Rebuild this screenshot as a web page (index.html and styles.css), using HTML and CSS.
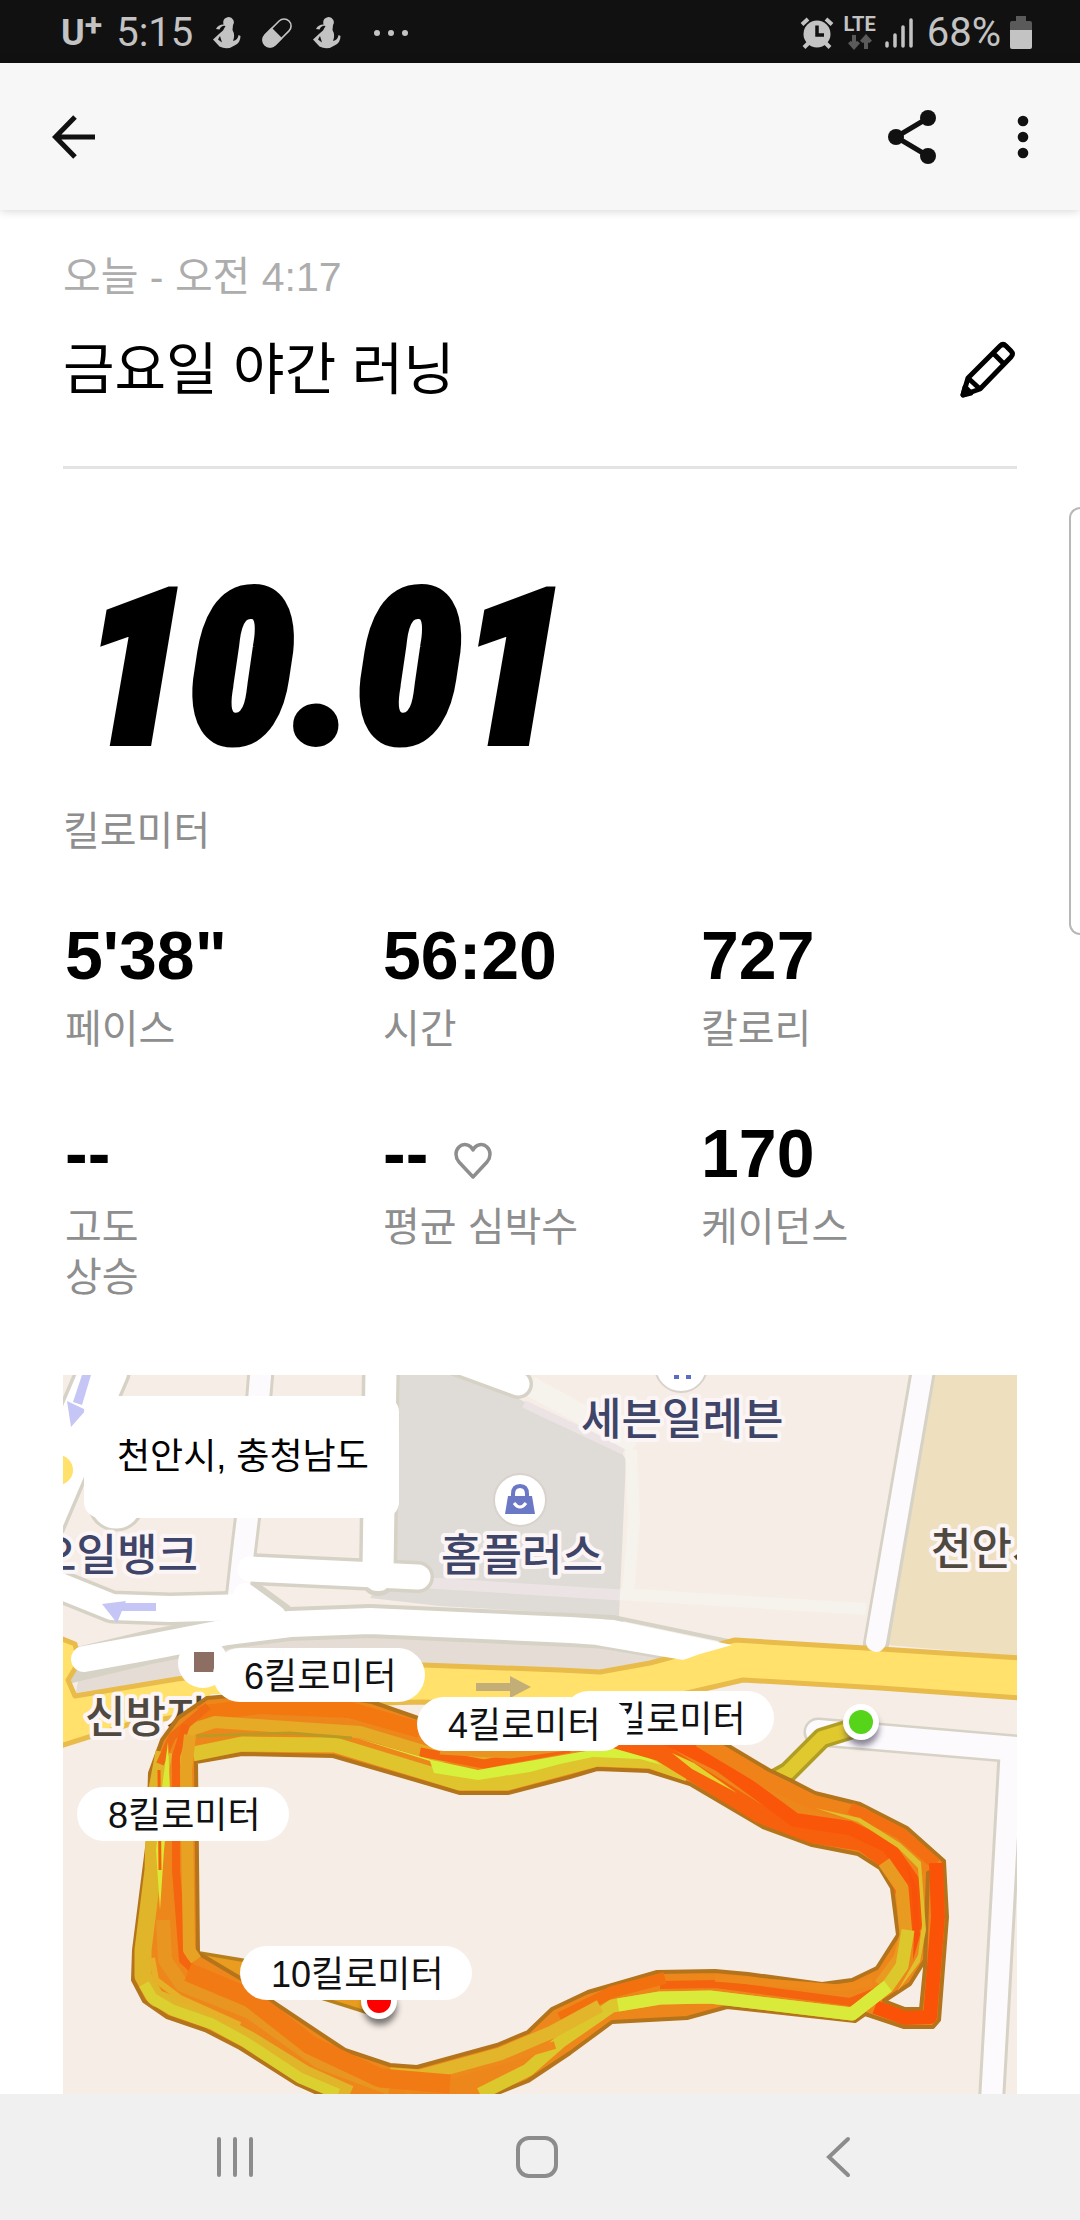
FILE: index.html
```
<!DOCTYPE html>
<html lang="ko">
<head>
<meta charset="utf-8">
<meta name="viewport" content="width=device-width, initial-scale=1">
<title>금요일 야간 러닝</title>
<link rel="stylesheet" href="styles.css">
</head>
<body>
<div class="app">
  <div class="status">
    <div class="status-left">
      <span class="carrier">U<span class="carrier-plus">+</span></span>
      <span class="clock">5:15</span>
      <svg class="notice" width="28" height="32" viewBox="0 0 28 32"><use href="#figure"/></svg>
      <svg class="notice" width="32" height="34" viewBox="0 0 32 34" aria-hidden="true">
        <g transform="rotate(-45 16 17)"><rect x="-1" y="10" width="34" height="14" rx="7" fill="none" stroke="#c3c3c3" stroke-width="1.600"/><path d="M16 9.200H6.500a7.800 7.800 0 0 0 0 15.600h9.500z" fill="#c3c3c3"/></g>
      </svg>
      <svg class="notice" width="28" height="32" viewBox="0 0 28 32"><use href="#figure"/></svg>
      <svg class="dots" width="36" height="8" viewBox="0 0 36 8" fill="#c3c3c3" aria-hidden="true"><circle cx="4" cy="4" r="3"/><circle cx="18" cy="4" r="3"/><circle cx="32" cy="4" r="3"/></svg>
    </div>
    <div class="status-right">
      <svg width="34" height="34" viewBox="0 0 34 34" aria-hidden="true">
        <circle cx="17" cy="18" r="13.500" fill="#c3c3c3"/>
        <g stroke="#c3c3c3" stroke-width="4"><path d="M2 8.500 8 3M32 8.500 26 3M4 31.500l5-5M30 31.500l-5-5"/></g>
        <path d="M17 9.500v9.500h7" fill="none" stroke="#111" stroke-width="3.500"/>
      </svg>
      <div class="network">
        <span>LTE</span>
        <svg width="24" height="16" viewBox="0 0 24 16" fill="none" stroke="#5a5a5a" stroke-width="4" aria-hidden="true"><path d="M6 1v11M1.500 8 6 13l4.500-5M18 15V4M13.500 8 18 3l4.500 5"/></svg>
      </div>
      <svg width="28" height="32" viewBox="0 0 28 32" stroke="#c3c3c3" stroke-width="3.500" stroke-linecap="round" aria-hidden="true"><path d="M2 26v3M10 18v11M18 10v19M26 3v26"/></svg>
      <span class="percent">68%</span>
      <svg class="battery" width="22" height="34" viewBox="0 0 22 34" aria-hidden="true"><path d="M6 0h10v5h4q2 0 2 2v8H0V7q0-2 2-2h4z" fill="#5a5a5a"/><path d="M0 14h22v17q0 2-2 2H2q-2 0-2-2z" fill="#c3c3c3"/></svg>
    </div>
  </div>

  <header class="toolbar">
    <button class="icon-button" aria-label="뒤로">
      <svg width="44" height="44" viewBox="0 0 44 44" fill="none" stroke="#111" stroke-width="5"><path d="M43 22H5M23 2 3.500 22 23 42"/></svg>
    </button>
    <div class="toolbar-actions">
      <button class="icon-button" aria-label="공유">
        <svg width="48" height="54" viewBox="0 0 48 54" fill="#111"><path d="M40 8 8 27l32 19" fill="none" stroke="#111" stroke-width="5"/><circle cx="40" cy="8" r="8"/><circle cx="8" cy="27" r="8"/><circle cx="40" cy="46" r="8"/></svg>
      </button>
      <button class="icon-button" aria-label="더보기">
        <svg width="12" height="44" viewBox="0 0 12 44" fill="#111"><circle cx="6" cy="6" r="5.300"/><circle cx="6" cy="22" r="5.300"/><circle cx="6" cy="38" r="5.300"/></svg>
      </button>
    </div>
  </header>

  <main class="content">
    <section class="intro">
      <p class="date">오늘 - 오전 4:17</p>
      <div class="title-row">
        <h1>금요일 야간 러닝</h1>
        <button class="icon-button" aria-label="이름 수정">
          <svg width="58" height="58" viewBox="0 0 58 58" fill="none" stroke="#000" stroke-width="5" stroke-linejoin="round"><path d="M4 54 9 37 41 5q3-3 6 0l5 5q3 3 0 6L21 48zM9 37l12 11M34 12l11 11"/><path d="M4 54l2-8 6 6z" fill="#000"/></svg>
        </button>
      </div>
    </section>

    <section class="distance">
      <p class="distance-value">10.01</p>
      <p class="label">킬로미터</p>
    </section>

    <section class="stats">
      <div class="stat"><p class="value">5'38"</p><p class="label">페이스</p></div>
      <div class="stat"><p class="value">56:20</p><p class="label">시간</p></div>
      <div class="stat"><p class="value">727</p><p class="label">칼로리</p></div>
      <div class="stat"><p class="value">--</p><p class="label label-narrow">고도 상승</p></div>
      <div class="stat"><p class="value">--<svg class="heart" width="38" height="38" viewBox="0 0 38 38" fill="none" stroke="#8e8e8e" stroke-width="3.500" stroke-linejoin="round" aria-hidden="true"><path d="M19 35 5 20C1 15 1 9 5 5s11-3 14 3c3-6 10-7 14-3s4 10 0 15z"/></svg></p><p class="label">평균 심박수</p></div>
      <div class="stat"><p class="value">170</p><p class="label">케이던스</p></div>
    </section>

    <section class="map" aria-label="러닝 경로">
      <svg class="map-art" viewBox="63 1375 954 719" preserveAspectRatio="xMidYMin slice">
        <defs><filter id="soft" x="-50%" y="-50%" width="200%" height="200%"><feGaussianBlur stdDeviation="3"/></filter></defs>
        <rect x="63" y="1375" width="954" height="719" fill="#f6ede6"/>
        <!-- blocks -->
        <path d="M400 1375H462L515 1397 620 1450 626 1460 619 1617 560 1613 440 1606 370 1598 396 1560z" fill="#dfdbd6"/>
        <path d="M430 1583 621 1595" stroke="#ece4e4" stroke-width="11"/>
        <path d="M620 1594 866 1609" stroke="#f6f2ec" stroke-width="12"/>
        <path d="M631 1450 634 1520 628 1594" fill="none" stroke="#f6f2ec" stroke-width="12"/>
        <path d="M524 1404 624 1451" stroke="#ece4e4" stroke-width="8"/>
        <path d="M530 1386 636 1444" stroke="#f6f2ec" stroke-width="20"/>
        <path d="M935 1375h82v281l-130-11z" fill="#eedfbf"/>
        <path d="M75 1696 80 1672 177 1650 227 1644 370 1630 570 1642 680 1657 600 1673 423 1666 177 1680z" fill="#e5ddd5"/>
        <!-- local roads -->
        <g fill="none" stroke="#d6d2c6" stroke-linecap="round" stroke-linejoin="round">
          <path d="M450 1359 518 1384" stroke-width="30"/>
          <path d="M104 1370 37 1527" stroke-width="54"/>
          <path d="M261 1370 252 1480 243 1555 238 1600" stroke-width="27"/>
          <path d="M381 1370 378 1570" stroke-width="38"/>
          <path d="M250 1569 418 1577" stroke-width="32"/>
          <path d="M377 1581h2" stroke-width="30"/>
          <path d="M60 1586 112 1607 170 1609 250 1607" stroke-width="33"/>
          <path d="M250 1594 280 1616" stroke-width="28"/>
          <path d="M66 1667 150 1647 227 1632 290 1624 370 1621 570 1630 610 1632" stroke-width="34"/>
          <path d="M613 1617 728 1641M598 1646 680 1660" stroke-width="4"/>
          <path d="M923 1370 876 1644" stroke-width="26"/>
          <path d="M818 1732 1040 1751" stroke-width="29"/>
          <path d="M1011 1756 991 2110" stroke-width="27"/>
        </g>
        <circle cx="116" cy="1503" r="27" fill="#fff" stroke="#d6d2c6" stroke-width="3"/>
        <!-- main road -->
        <path d="M60 1638 75 1644 79 1662 68 1680 75 1696 177 1679 300 1664 423 1665 560 1670 600 1672 650 1663 735 1640 865 1648 1020 1658V1698L880 1688 743 1680 687 1693 620 1704 500 1705 423 1702 250 1706 130 1724 60 1746z" fill="#ffe16b" stroke="#e8bb4b" stroke-width="5" stroke-linejoin="round"/>
        <g fill="none" stroke="#fff" stroke-linecap="round" stroke-linejoin="round">
          <path d="M450 1359 518 1384" stroke-width="23"/>
          <path d="M104 1370 37 1527" stroke-width="47"/>
          <path d="M261 1370 252 1480 243 1555 238 1600" stroke="#fdfafe" stroke-width="21"/>
          <path d="M381 1370 378 1570" stroke-width="31"/>
          <path d="M250 1569 418 1577" stroke-width="25"/>
          <path d="M377 1579h2" stroke-width="24"/>
          <path d="M60 1586 112 1607 170 1609 250 1607" stroke-width="26"/>
          <path d="M245 1594 275 1616" stroke-width="22"/>
          <path d="M84 1659 150 1647 227 1632 290 1624 370 1621 570 1630 600 1632" stroke-width="26"/>
          <path d="M923 1370 876 1642" stroke="#fdfafe" stroke-width="20"/>
          <path d="M818 1732 1040 1751" stroke="#fdfafe" stroke-width="24"/>
          <path d="M1011 1756 991 2110" stroke="#fdfafe" stroke-width="21"/>
        </g>
        <path d="M596 1619 614 1620 732 1645 700 1654 683 1660 596 1645z" fill="#fff"/>
        <circle cx="58" cy="1470" r="15" fill="#ffe16b"/>
        <!-- direction arrows -->
        <g fill="#c5c6f5"><path d="M82 1375h9l-9 30-9-3z"/><path d="M67 1401 86 1410 71 1427z"/><path d="M118 1603h38v8h-38z"/><path d="M102 1604 126 1601 117 1623z"/></g>
        <path d="M476 1683h34v-7l21 11-21 11v-7h-34z" fill="#c4ae78"/>
        <!-- places -->
        <g fill="#fff" stroke="#d9d2cc" stroke-width="2"><circle cx="520" cy="1500" r="26"/><circle cx="681" cy="1366" r="26"/></g>
        <circle cx="203" cy="1663" r="25" fill="#fff"/>
        <path d="M194 1652h20v20h-20z" fill="#8d6e63"/>
        <path d="M674 1375h5v4h-5zM686 1375h5v4h-5z" fill="#5b6cc4"/>
        <path d="M508 1496h24l3 18h-30z" fill="#6b78c6"/>
        <path d="M513 1498v-4q0-8 7-8t7 8v4" fill="none" stroke="#6b78c6" stroke-width="4"/>
        <path d="M514 1503q6 8 12 0" fill="none" stroke="#fff" stroke-width="3"/>
        <g>
          <text x="441" y="1571" class="place place-shop">홈플러스</text>
          <text x="36" y="1571" class="place place-shop">오일뱅크</text>
          <text x="581" y="1435" class="place place-shop">세븐일레븐</text>
          <text x="931" y="1565" class="place place-area">천안시</text>
          <text x="85" y="1733" class="place place-area">신방지구</text>
        </g>
        <!-- connectors to start and finish -->
        <g fill="none" stroke-linejoin="round">
          <path d="M770 1782 788 1772 822 1738 861 1726" stroke="#b09e24" stroke-width="21"/>
          <path d="M770 1782 788 1772 822 1738 861 1726" stroke="#e0c82f" stroke-width="14"/>
          <path d="M195 1962 290 1978 379 2006" stroke="#b8801d" stroke-width="23"/>
          <path d="M195 1962 290 1978 379 2006" stroke="#e99c20" stroke-width="16"/>
        </g>
        <!-- run laps -->
        <path fill-rule="evenodd" fill="#ee871b" stroke="#b4741b" stroke-width="4" stroke-linejoin="round" d="M207 1698 178 1718 162 1740 150 1773 148 1840 134 1950 133 1980 144 2001 167 2017 205 2030 240 2048 297 2084 333 2100H480L528 2081 570 2053 612 2022 687 2018 727 2007 855 2021 865 2014 904 2027H933L939 2020 947 1917 944 1861 907 1828 860 1804 815 1793 790 1780 769 1770 727 1745 690 1726 600 1718 520 1722 418 1718 372 1702 300 1690zM196 1762 242 1754 333 1756 460 1793 508 1793 570 1777 597 1769 648 1771 690 1784 763 1827 812 1845 858 1854 880 1868 892 1888 898 1935 877 1968 852 1980 822 1984 748 1974 715 1971 657 1972 588 1992 552 2009 528 2032 497 2045 417 2067 390 2065 345 2050 270 2000 240 1978 198 1953zM928 1872 925 1968 921 2009H905L884 2001 910 1984 925 1960z"/>
        <g fill="none" stroke-linejoin="round">
          <path d="M198 1714 260 1706 350 1710 420 1730" stroke="#f2780f" stroke-width="16"/>
          <path d="M184 1766 190 1730 215 1722 300 1728 360 1732 440 1756 508 1758" stroke="#e5ab26" stroke-width="12"/>
          <path d="M193 1754 242 1744 335 1745 460 1783 507 1783 597 1759 650 1761 688 1774" stroke="#dfc42d" stroke-width="15"/>
          <path d="M197 1736 290 1733 352 1738" stroke="#b99b24" stroke-width="3"/>
          <path d="M420 1752 484 1764 570 1748" stroke="#f4640f" stroke-width="9"/>
          <path d="M440 1750 510 1754 580 1744" stroke="#ea9320" stroke-width="9"/>
          <path d="M350 1736 430 1761 434 1773 478 1780 530 1772 560 1764 593 1757 640 1759 662 1765 625 1745 580 1752 478 1770 432 1760z" fill="#d7f03c"/>
          <path d="M600 1735 660 1752 760 1814 812 1834 862 1842 890 1862 904 1890" stroke="#f7600d" stroke-width="18"/>
          <path d="M660 1735 720 1765 795 1820 850 1828 888 1846 912 1880 918 1930" stroke="#f9560a" stroke-width="14"/>
          <path d="M700 1740 770 1782 815 1803 862 1815 905 1842 926 1872" stroke="#ef8219" stroke-width="15"/>
          <path d="M850 1808 900 1833 936 1864" stroke="#f36f12" stroke-width="12"/>
          <path d="M815 1808 860 1818 900 1843 921 1862 926 1930 920 1962 897 1992 918 1955 922 1925 918 1868 898 1848 858 1822z" fill="#e0c02c"/>
          <path d="M672 1753 694 1763 737 1793 692 1769z" fill="#e3d32e"/>
          <path d="M936 1863 938 1917 930 2017 905 2018 875 2007" stroke="#fa5308" stroke-width="14"/>
          <path d="M884 1862 902 1888 906 1935 900 1958 880 1985" stroke="#e99a20" stroke-width="13"/>
          <path d="M906 1864 917 1888 920 1935 913 1960 914 1935 912 1890z" fill="#f8520a"/>
          <path d="M660 1985 715 1984 850 2002 885 1988" stroke="#f4640f" stroke-width="8"/>
          <path d="M715 1978 840 1988 872 1982" stroke="#ee8a1c" stroke-width="7"/>
          <path d="M560 2018 612 1992 665 1978" stroke="#f3700f" stroke-width="12"/>
          <path d="M908 1930 902 1966 888 1986 852 2014 710 1997 660 1998 612 2006 560 2042 528 2070 480 2094" stroke="#dcc82c" stroke-width="13"/>
          <path d="M888 1986 852 2014 710 1997 660 1998 618 2005" stroke="#d9ea3a" stroke-width="13"/>
          <path d="M405 2092 440 2078 555 2045" stroke="#ee8a1c" stroke-width="8"/>
          <path d="M390 2074 420 2076 500 2054 552 2032 600 2006" stroke="#e2b52a" stroke-width="13"/>
          <!-- west side -->
          <path d="M164 1752 155 1800 153 1870 143 1950 143 1976 156 1998 212 2020 250 2040 305 2074 350 2094" stroke="#e0b52a" stroke-width="17"/>
          <path d="M144 1984 152 1998 172 2010 212 2024 245 2042 300 2078 338 2094" stroke="#dcd030" stroke-width="11"/>
          <path d="M160 1764 172 1737 208 1706" stroke="#f06c12" stroke-width="8"/>
          <path d="M168 1742 170 1790 164 1850 160 1910 156 1850 163 1780z" fill="#dbe936"/>
          <path d="M159 1770 160 1870" stroke="#f4600e" stroke-width="3"/>
          <path d="M186 1725 176 1756 176 1870 183 1960 200 1976" stroke="#f5640f" stroke-width="8"/>
          <path d="M190 1735 186 1770 189 1950 196 1960" stroke="#e8a223" stroke-width="12"/>
          <path d="M163 1920 165 1960 182 1985 250 2012 320 2062 390 2088" stroke="#e99522" stroke-width="14"/>
          <path d="M188 1972 250 1998 310 2045 380 2078 450 2084" stroke="#f27a14" stroke-width="19"/>
          <path d="M152 1958 156 1980 180 1998 240 2025" stroke="#e6b128" stroke-width="6"/>
        </g>
        <!-- finish and start markers -->
        <circle cx="380" cy="2008" r="17" fill="#000" opacity=".5" filter="url(#soft)"/>
        <circle cx="379" cy="2001" r="18" fill="#fff"/><circle cx="379" cy="2001" r="12" fill="#f00"/>
        <circle cx="862" cy="1729" r="17" fill="#3c3850" opacity=".6" filter="url(#soft)"/>
        <circle cx="861" cy="1722" r="18" fill="#fff"/><circle cx="861" cy="1722" r="12" fill="#55d41a"/>
      </svg>
      <p class="location">천안시, 충청남도</p>
      <span class="pin pin-2">2킬로미터</span>
      <span class="pin pin-4">4킬로미터</span>
      <span class="pin pin-6">6킬로미터</span>
      <span class="pin pin-8">8킬로미터</span>
      <span class="pin pin-10">10킬로미터</span>
    </section>
  </main>

  <nav class="system-nav">
    <button class="icon-button" aria-label="최근 앱"><svg width="42" height="42" viewBox="0 0 42 42" stroke="#8c8c8c" stroke-width="4" stroke-linecap="round"><path d="M4 3v36M20 3v36M36 3v36"/></svg></button>
    <button class="icon-button" aria-label="홈"><svg width="42" height="42" viewBox="0 0 42 42" fill="none" stroke="#8c8c8c" stroke-width="4"><rect x="2" y="2" width="38" height="38" rx="11"/></svg></button>
    <button class="icon-button" aria-label="이전"><svg width="42" height="42" viewBox="0 0 42 42" fill="none" stroke="#8c8c8c" stroke-width="4" stroke-linecap="round"><path d="M31 3 12 21l19 18"/></svg></button>
  </nav>
  <div class="edge-panel"></div>
</div>

<svg width="0" height="0" class="defs" aria-hidden="true">
  <symbol id="figure" viewBox="0 0 28 32">
    <path d="M15.500 0a5.200 5.200 0 0 1 4.500 8l-.5 5q3 5 .500 11 5-1 5.500-6l2 1q0 7-6 9.500-7 5-15 1L0 22.500l6.500-6 3.500-3 2.500-4.500q-4-1-6 3.500L3 12q2-4.500 7.500-4.500Q9 1 15.500 0zM7 19l-2 3.500 4 3z" fill="#c3c3c3" fill-rule="evenodd"/>
  </symbol>
</svg>
</body>
</html>
```
FILE: styles.css
```
* {
  box-sizing: border-box;
}

body {
  margin: 0;
  background: #fff;
  color: #000;
  font-family: "Liberation Sans", "Noto Sans CJK KR", sans-serif;
}

p,
h1 {
  margin: 0;
}

svg {
  display: block;
  flex: none;
}

.defs {
  position: absolute;
}

.app {
  position: relative;
  display: flex;
  flex-direction: column;
  min-height: 100vh;
}

.icon-button {
  display: flex;
  padding: 0;
  border: 0;
  background: none;
}

/* status bar */
.status {
  display: flex;
  justify-content: space-between;
  align-items: center;
  height: 63px;
  padding: 2px 48px 0 61px;
  background: #111;
  color: #c3c3c3;
  font-family: Roboto, sans-serif;
  font-size: 40px;
  line-height: 48px;
}

.status-left,
.status-right {
  display: flex;
  align-items: center;
}

.carrier {
  display: flex;
  font-weight: 700;
  font-size: 36px;
}

.carrier-plus {
  font-size: 32px;
  line-height: 32px;
}

.clock {
  margin: 0 20px 0 14px;
}

.notice {
  margin-right: 20px;
}

.dots {
  margin-left: 12px;
}

.status-right {
  gap: 9px;
}

.network {
  display: flex;
  flex-direction: column;
  align-items: center;
  gap: 1px;
  font-weight: 700;
  font-size: 20px;
  line-height: 18px;
}

.percent {
  margin-left: 5px;
}

/* app bar */
.toolbar {
  display: flex;
  justify-content: space-between;
  align-items: center;
  height: 147px;
  padding: 0 51px 0 52px;
  background: #f7f7f7;
  box-shadow: 0 0 10px rgba(0, 0, 0, 0.2);
}

.toolbar-actions {
  display: flex;
  align-items: center;
  gap: 81px;
}

/* run summary */
.content {
  display: flex;
  flex: 1;
  flex-direction: column;
  padding: 43px 63px 0;
}

.intro {
  padding-bottom: 56px;
  border-bottom: 3px solid #e3e3e3;
}

.date {
  color: #adadad;
  font-size: 41px;
  line-height: 48px;
}

.title-row {
  display: flex;
  justify-content: space-between;
  align-items: center;
  margin-top: 29px;
}

h1 {
  font-weight: 400;
  font-size: 56px;
  line-height: 80px;
}

.distance {
  padding-top: 87px;
}

.distance-value {
  padding-left: 20px;
  font-family: "Roboto Condensed", Roboto, sans-serif;
  font-style: italic;
  font-weight: 900;
  font-size: 212px;
  line-height: 228px;
  -webkit-text-stroke: 8px #000;
}

.label {
  color: #8e8e8e;
  font-size: 40px;
  line-height: 50px;
}

.distance .label {
  margin-top: 22px;
}

.label-narrow {
  max-width: 120px;
}

.stats {
  display: grid;
  grid-template-columns: repeat(3, 1fr);
  row-gap: 59px;
  padding: 59px 0 73px;
}

.stat {
  padding-left: 2px;
}

.value {
  display: flex;
  align-items: center;
  margin-bottom: 9px;
  font-weight: 700;
  font-size: 68px;
  line-height: 80px;
}

.heart {
  margin: 16px 0 0 26px;
}

/* map */
.map {
  position: relative;
  flex: 1;
  min-height: 719px;
  overflow: hidden;
}

.map-art {
  position: absolute;
  width: 100%;
  height: 100%;
}

.place {
  font-family: "Noto Sans CJK KR", sans-serif;
  font-weight: 500;
  font-size: 44px;
  paint-order: stroke;
  stroke: #fbf5f6;
  stroke-width: 8px;
  stroke-linejoin: round;
}

.place-shop {
  fill: #3f4469;
}

.place-area {
  fill: #504940;
}

.location,
.pin {
  position: absolute;
  background: #fff;
  font-size: 36px;
  white-space: nowrap;
}

.location {
  top: 21px;
  left: 21px;
  padding: 0 30px 0 33px;
  border-radius: 16px;
  line-height: 122px;
}

.pin {
  padding: 4px 28px 0 31px;
  border-radius: 27px;
  color: #111;
  line-height: 50px;
}

.pin-2 {
  top: 316px;
  left: 499px;
}

.pin-4 {
  top: 322px;
  left: 354px;
}

.pin-6 {
  top: 273px;
  left: 150px;
}

.pin-8 {
  top: 412px;
  left: 14px;
}

.pin-10 {
  top: 571px;
  left: 177px;
}

/* system navigation */
.system-nav {
  display: flex;
  justify-content: space-between;
  align-items: center;
  height: 126px;
  padding: 0 221px 0 215px;
  background: #f0f0f0;
}

.edge-panel {
  position: absolute;
  top: 507px;
  right: 0;
  width: 11px;
  height: 428px;
  border: 2px solid #b8b8b8;
  border-right: 0;
  border-radius: 16px 0 0 16px;
}
```
